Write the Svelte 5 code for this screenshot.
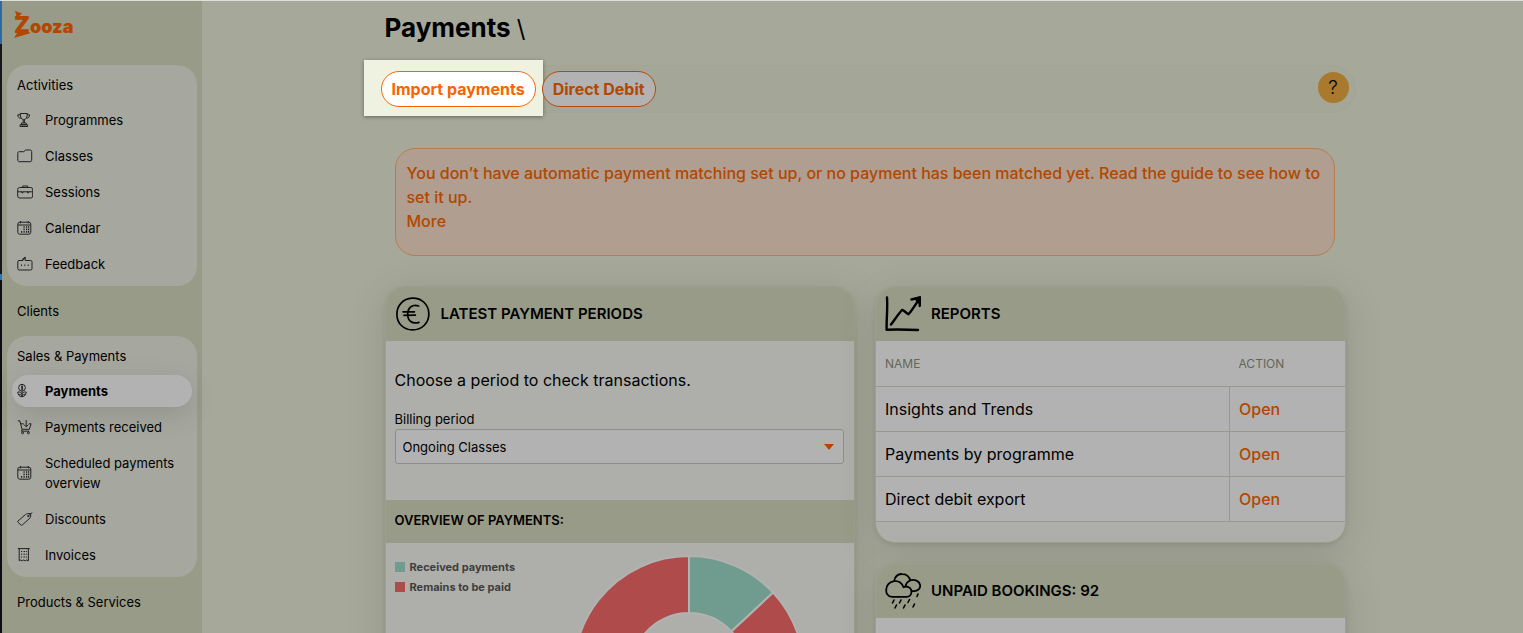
<script>
  const activities = [
    { label: 'Programmes', icon: 'trophy' },
    { label: 'Classes', icon: 'folder' },
    { label: 'Sessions', icon: 'case' },
    { label: 'Calendar', icon: 'calendar' },
    { label: 'Feedback', icon: 'feedback' }
  ];
  const sales = [
    { label: 'Payments', icon: 'coin', active: true },
    { label: 'Payments received', icon: 'cart' },
    { label: 'Scheduled payments overview', icon: 'calendar' },
    { label: 'Discounts', icon: 'tag' },
    { label: 'Invoices', icon: 'invoice' }
  ];
  const reports = ['Insights and Trends', 'Payments by programme', 'Direct debit export'];
  let period = $state('Ongoing Classes');
</script>

{#snippet icon(name)}
  <svg class="icon" viewBox="0 0 16 16" aria-hidden="true">
    {#if name === 'trophy'}
      <path d="M3 1.5h7.5M3.2 1.5c0 4 1.2 5.8 3.6 6.3 2.300-.5 3.500-2.300 3.500-6.300M3.200 2.800H.8c0 2.200 1 3.300 3 3.400M10.300 2.800h2.200c0 2.200-.9 3.300-2.800 3.400M6.200 7.800v3M7.400 7.800v3M4.500 11h4.700v1.800H4.500zM3 12.800h7.600v1.700H3z" />
    {:else if name === 'folder'}
      <path d="M.8 5.200c0-1 .5-1.500 1.500-1.500h4.500c1 0 .8-1.700 1.800-1.700h4.600c.9 0 1.500.5 1.500 1.500v8.700c0 .9-.5 1.500-1.500 1.500H2.300c-1 0-1.500-.6-1.500-1.500z" />
    {:else if name === 'case'}
      <rect x=".7" y="3.500" width="15" height="10.500" rx="2" />
      <path d="M5.700 3.300V2h5v1.300M.8 7.800h4M6 7.800h4.500M11.700 7.800h4M4.800 7.200v1.600H6V7.200M10.500 7.200v1.600h1.200V7.200" />
    {:else if name === 'calendar'}
      <rect x=".8" y="2.200" width="13" height="12" rx="2" />
      <path d="M.8 5h13M3.500 1v2.400M11.200 1v2.400" />
      <path stroke-width="1.700" d="M6.500 7h1.200M9 7h1.200M11 7h1.200M6.500 9.400h1.200M9 9.400h1.200M11 9.400h1.200M4 11.800h1.200M6.500 11.800h1.200M9 11.800h1.200M11 11.800h1.200" />
    {:else if name === 'feedback'}
      <path d="M2 4.500h4L8.200 1.200v3.300h5.500c.8 0 1.300.5 1.300 1.300v6.900c0 .8-.5 1.300-1.300 1.300H2.100C1.300 14 .8 13.500.8 12.700V5.800c0-.8.500-1.300 1.200-1.300zM5 3.500 8.200 1.200" />
      <path stroke-width="1.400" d="M4 9.200h1M7.300 9.200h1M10.700 9.200h1" />
    {:else if name === 'coin'}
      <circle cx="5" cy="4.700" r="3.400" />
      <path d="M6 3.200H4.700v1.500h1v1.600H4.200M5 2.500v4.600M5 8.200v5.600M.8 9c2.600-.3 3.900.7 4.200 2.400C5.300 9.700 6.600 8.700 9.200 9c-.2 2.700-1.400 4.500-4.200 4.800C2.200 13.500 1 11.700.8 9zM1.500 11.400c1.800-.2 2.800.5 3.500 1.900.7-1.400 1.700-2.100 3.500-1.900" />
    {:else if name === 'cart'}
      <path d="M.8 1.800h2l2.300 8.500h7.200l1.800-5.500h-2.200M4 4.800h2.700M5.100 10.300l-.6 1.900h7.800M9.200 1v6.500M7 5.600l2.200 2.200 2.200-2.200" />
      <circle cx="5.600" cy="13.800" r="1" /><circle cx="11.400" cy="13.800" r="1" />
    {:else if name === 'tag'}
      <path d="m1 10 7.500-6.500c1.300-.9 3-1 5-1 .4 2 .3 3.400-.7 4.700L5.300 14c-.5.400-1 .4-1.400-.1L.9 11.300C.5 10.800.5 10.400 1 10zM11.500 4.800l3.800-3.300M10.800 4.600h1v1h-1z" />
    {:else if name === 'invoice'}
      <path d="M.8 1.600h12M2.200 1.600v12.200l1.500-.8 1.500.8 1.500-.8 1.500.8 1.500-.8 1.700.8V1.600" />
      <path d="M4 4.500h1.200M4 7.200h1.200M4 10h1.200M6.500 4.500h1.700M6.500 7.200h1.700M6.500 10h1.700M9.200 4.500h.9M9.200 7.200h.9M9.200 10h.9" />
    {/if}
  </svg>
{/snippet}

{#snippet menu(title, items)}
  <section class="group">
    <h2>{title}</h2>
    <ul>
      {#each items as item}
        <li>
          <a href="#top" class:active={item.active}>
            {@render icon(item.icon)}
            <span>{item.label}</span>
          </a>
        </li>
      {/each}
    </ul>
  </section>
{/snippet}

<div class="app">
  <div class="edge"></div>
  <nav class="sidebar">
    <a class="logo" href="#top" aria-label="Zooza">
      <svg viewBox="0 0 62 36" width="62" height="36">
        <path d="M2 6 9 8.500 4 13zM1 33l5-8 12 3z" />
        <text x="1" y="28"><tspan font-size="23">Z</tspan><tspan font-size="18">ooza</tspan></text>
      </svg>
    </a>
    {@render menu('Activities', activities)}
    <a class="section" href="#top">Clients</a>
    {@render menu('Sales & Payments', sales)}
    <a class="section" href="#top">Products &amp; Services</a>
  </nav>

  <main>
    <div class="content">
      <h1>Payments <span>\</span></h1>

      <div class="toolbar">
        <div class="spot"><button class="pill lit">Import payments</button></div>
        <button class="pill">Direct Debit</button>
        <button class="help" aria-label="Help">?</button>
      </div>

      <div class="alert">
        <p>You don’t have automatic payment matching set up, or no payment has been matched yet. Read the guide to see how to set it up.</p>
        <a href="#top">More</a>
      </div>

      <div class="columns">
        <section class="card">
          <header>
            <svg class="big" viewBox="-1 -1 38 38" aria-hidden="true">
              <path d="M17 1.200C27 .7 34.500 8 34.700 17.500 35 27.500 27.500 34.700 17.500 34.800 8 34.700 1 28 1 18.200 1 9 7.500 1.700 17 1.200z" />
              <path d="M24 9.500c-6.500-2-11.500 1.500-11.600 8.500 0 7.500 4.500 10.800 12 8.800M7.500 15.700h12M8.500 19.500l12-.3" />
            </svg>
            <h2>Latest payment periods</h2>
          </header>
          <div class="choose">
            <p>Choose a period to check transactions.</p>
            <label for="period">Billing period</label>
            <div class="select">
              <select id="period" bind:value={period}>
                <option>Ongoing Classes</option>
              </select>
              <svg viewBox="0 0 10 6" aria-hidden="true"><path d="M0 0h10L5 6z" /></svg>
            </div>
          </div>
          <h3>Overview of payments:</h3>
          <div class="overview">
            <ul class="legend">
              <li><i class="received"></i>Received payments</li>
              <li><i class="remains"></i>Remains to be paid</li>
            </ul>
            <svg class="donut" viewBox="-116 -116 232 232" role="img" aria-label="Payments chart">
              <path class="green" d="M0-115A115 115 0 0 1 84.100-78.400L42.400-39.600A58 58 0 0 0 0-58z" />
              <path class="red" d="M84.100-78.400A115 115 0 1 1 0-115V-58A58 58 0 1 0 42.400-39.600z" />
            </svg>
          </div>
        </section>

        <div class="stack">
          <section class="card">
            <header>
              <svg class="big" viewBox="0 0 36 36" aria-hidden="true">
                <path stroke-width="2.400" d="M2 1.500c.8 11-.6 21-.4 32.300C12 33.200 23 33.600 33 34" />
                <path stroke-width="2.400" d="M6 28.500C9.500 24 13 18.500 17 14c2.500.5 4 3 6.500 4.300C27 14.500 31 8 34.500 2.500M26.500 3.500l8.500-2-.3 8.500" />
                <path class="solid" d="m30 2.500 5-1.500v7z" />
              </svg>
              <h2>Reports</h2>
            </header>
            <table>
              <thead>
                <tr><th>Name</th><th>Action</th></tr>
              </thead>
              <tbody>
                {#each reports as report}
                  <tr><td>{report}</td><td><a href="#top">Open</a></td></tr>
                {/each}
              </tbody>
            </table>
            <div class="foot"></div>
          </section>

          <section class="card">
            <header>
              <svg class="big" viewBox="0 0 36 36" aria-hidden="true">
                <path d="M7 23.800c-4-.5-6-3.500-5.800-7C1.400 12.500 4.500 9.200 9 8.200c5-.8 8 1.800 9.500 6 3.500-1.800 8 .3 8 4.500 0 3-2 5.100-5 5.100zM9 8.200C10 3.500 13 .8 17 1c4.500 0 7.500 3 8.200 6.500-2.200.8-4 2.500-4.700 5.300M25.200 7.300c5-1.300 9.800 1 10 5.500.1 3.500-3 5.500-7.500 5.400" />
                <path stroke-width="1.600" d="m9 27-1.500 3M16 27l-1.500 3M24.500 26.500l-1.500 3M11.500 32l-1.500 3M20 32l-1.500 3M29.500 31l-1.500 3M33 21l-1 2.500" />
              </svg>
              <h2>Unpaid bookings: 92</h2>
            </header>
            <div class="blank"></div>
          </section>
        </div>
      </div>
    </div>
  </main>
</div>

<style>
  :global(body) {
    margin: 0;
  }
  .app {
    display: flex;
    height: 100vh;
    box-sizing: border-box;
    overflow: hidden;
    border-top: 1px solid #dcdfda;
    background: #a6a99a;
    color: #000;
    font-family: Inter, 'Liberation Sans', sans-serif;
    font-size: 16px;
  }
  .app *,
  .app *::before {
    box-sizing: border-box;
  }
  h1, h2, h3, p, ul {
    margin: 0;
    padding: 0;
  }
  ul {
    list-style: none;
  }
  a {
    color: inherit;
    text-decoration: none;
  }
  button, select {
    font: inherit;
  }
  svg {
    display: block;
    flex: none;
  }

  .edge {
    flex: 0 0 2px;
    background: linear-gradient(#2a6aa5 0 43px, #17171b 43px 273px, #2a76bd 273px 279px, #0c0c12 279px);
  }
  .sidebar {
    flex: 0 0 200px;
    padding: 4px 5px 0;
    background: #989b87;
    font-size: 13px;
    line-height: 20px;
  }
  .logo {
    display: block;
    height: 60px;
    padding-left: 6px;
    fill: #b34700;
    font-weight: 900;
  }
  .group {
    padding: 10px 5px 6px;
    border-radius: 20px;
    background: #a6a79e;
  }
  .group h2 {
    margin: 0 5px 9px;
    font-size: 13px;
    font-weight: 400;
  }
  .group ul {
    display: grid;
    gap: 4px;
  }
  .group a {
    display: flex;
    align-items: center;
    gap: 12px;
    padding: 6px 5px;
    border-radius: 16px;
  }
  .group a.active {
    background: #b2b2b2;
    font-weight: 700;
    box-shadow: 0 8px 28px rgba(0, 0, 0, 0.12);
  }
  .icon {
    width: 16px;
    height: 16px;
    fill: none;
    stroke: #222;
    stroke-width: 1;
  }
  .section {
    display: block;
    padding: 15px 10px;
  }

  main {
    flex: 1;
    min-width: 0;
    padding: 0 0 0 6px;
  }
  .content {
    max-width: 980px;
    margin: 0 auto;
  }
  h1 {
    padding: 10px 9px 19px;
    font-size: 26px;
    line-height: 34px;
    font-weight: 700;
  }
  h1 span {
    font-weight: 400;
    font-size: 24px;
  }
  .toolbar {
    display: flex;
    align-items: center;
    gap: 6px;
    height: 48px;
    padding: 0 6px 0 4px;
    border: 1px solid #a2a595;
    border-radius: 24px;
    background: #a4a797;
  }
  .spot {
    position: relative;
  }
  .spot::before {
    content: '';
    position: absolute;
    inset: -11px -7px -9px -17px;
    background: #eff2e0;
    box-shadow: 0 1px 4px rgba(0, 0, 0, 0.4);
  }
  .pill {
    position: relative;
    display: block;
    height: 36px;
    padding: 0 10px;
    border: 1px solid #b34a08;
    border-radius: 18px;
    background: #b2b2b2;
    color: #b34700;
    font-size: 16px;
    font-weight: 700;
  }
  .lit {
    border-color: #fa6400;
    background: #fff;
    color: #fa6400;
  }
  .help {
    width: 31px;
    height: 31px;
    margin: 0 0 4px auto;
    padding: 0;
    border: 0;
    border-radius: 50%;
    background: #a9792e;
    color: #000;
    font-size: 19px;
    font-weight: 300;
  }
  .alert {
    margin: 35px 21px 30px 19px;
    padding: 12px 11px 22px;
    border: 1px solid #b87c50;
    border-radius: 20px;
    background: #b09e90;
    color: #b34700;
    font-weight: 500;
    line-height: 24px;
  }

  .columns {
    display: grid;
    grid-template-columns: 1fr 1fr;
    align-items: start;
    gap: 20px;
    padding: 0 10px 0 9px;
  }
  .stack {
    display: grid;
    gap: 20px;
  }
  .card {
    overflow: hidden;
    border: 1px solid #9c9f8c;
    border-radius: 20px;
    background: #aeafaa;
    box-shadow: 0 2px 4px rgba(0, 0, 0, 0.08), 0 8px 40px rgba(0, 0, 0, 0.12);
  }
  .card header {
    display: flex;
    align-items: center;
    gap: 10px;
    height: 54px;
    padding: 0 9px;
    background: #989b87;
  }
  .card h2 {
    font-size: 15px;
    line-height: 20px;
    font-weight: 600;
    text-transform: uppercase;
  }
  .big {
    width: 36px;
    height: 36px;
    fill: none;
    stroke: #000;
    stroke-width: 1.8;
    stroke-linecap: round;
    stroke-linejoin: round;
  }
  .solid {
    fill: #000;
  }
  .choose {
    padding: 28px 10px 36px 9px;
  }
  .choose p {
    margin-bottom: 18px;
    line-height: 22px;
  }
  .choose label {
    display: block;
    font-size: 13px;
    line-height: 20px;
  }
  .select {
    position: relative;
  }
  select {
    display: block;
    width: 100%;
    height: 35px;
    padding: 0 7px;
    appearance: none;
    border: 1px solid #8c8c8c;
    border-radius: 3px;
    background: #b2b2b2;
    color: #000;
    font-size: 13px;
  }
  .select svg {
    position: absolute;
    top: 15px;
    right: 10px;
    width: 10px;
    fill: #b34700;
    pointer-events: none;
  }
  h3 {
    padding: 10px 9px 13px;
    background: #989b87;
    font-size: 13px;
    line-height: 20px;
    font-weight: 600;
    text-transform: uppercase;
  }
  .overview {
    display: flex;
    padding: 12px 49px 20px 9px;
    justify-content: space-between;
  }
  .legend {
    padding-top: 2px;
    color: #3e3e3e;
    font-size: 11px;
    font-weight: 700;
    line-height: 20px;
  }
  .legend li {
    display: flex;
    align-items: center;
    gap: 5px;
  }
  .legend i {
    width: 10px;
    height: 10px;
  }
  .received {
    background: #6f9c8f;
  }
  .remains {
    background: #b04b4b;
  }
  .donut {
    width: 232px;
    height: 232px;
    stroke: #b2b2b2;
    stroke-width: 2;
  }
  .green {
    fill: #6f9c8f;
  }
  .red {
    fill: #b04b4b;
  }

  table {
    width: 100%;
    border-collapse: collapse;
    background: #b2b2b2;
    text-align: left;
  }
  th, td {
    height: 45px;
    padding: 0 9px;
    border-bottom: 1px solid #989b87;
  }
  th {
    color: #64665a;
    font-size: 12px;
    font-weight: 400;
    text-transform: uppercase;
  }
  th:last-child, td:last-child {
    width: 115px;
  }
  td:last-child {
    border-left: 1px solid #989b87;
    color: #b34700;
    font-weight: 500;
  }
  .foot {
    height: 20px;
  }
  .blank {
    height: 120px;
    background: #b2b2b2;
  }
</style>
